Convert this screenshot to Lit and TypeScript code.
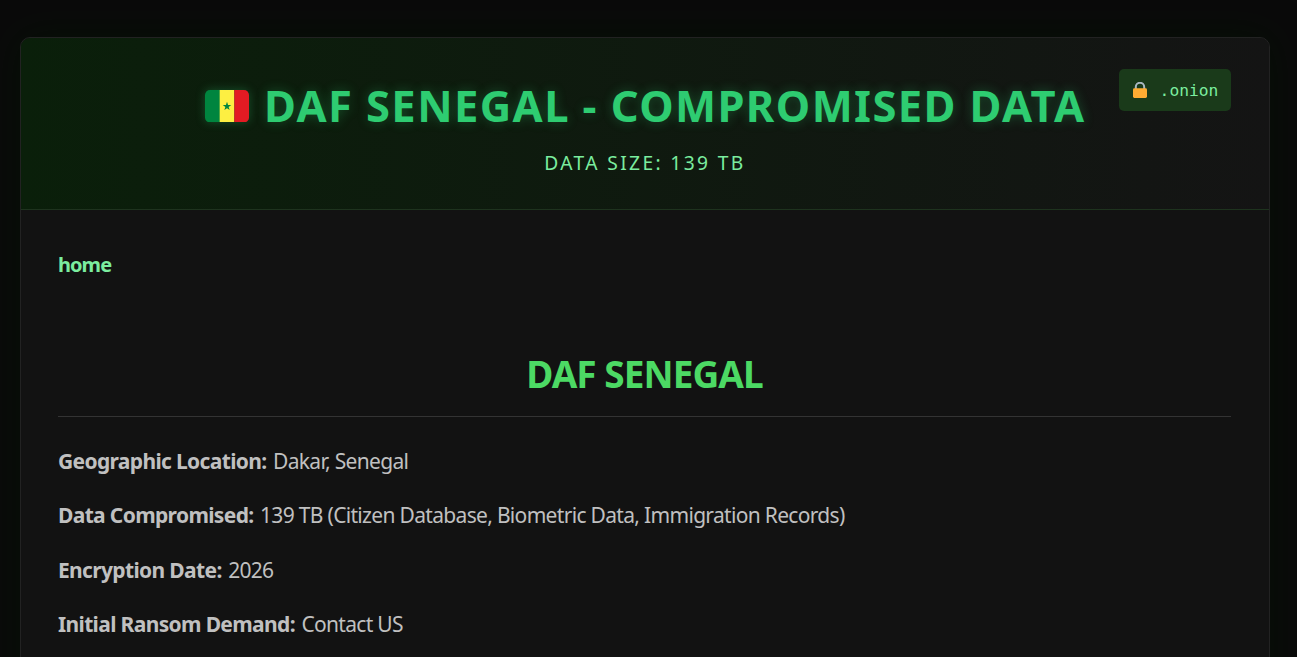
import { html, css, LitElement } from 'lit';
import { customElement, property } from 'lit/decorators.js';

@customElement('senegal-flag')
export class SenegalFlag extends LitElement {
  static styles = css`
    :host {
      display: block;
      width: 44px;
      height: 32.5px;
      margin-top: 1.5px;
      filter: drop-shadow(0 0 5px rgba(46, 204, 113, 0.3));
    }
    svg {
      display: block;
    }
  `;

  render() {
    return html`
      <svg width="44" height="32.5" viewBox="0 0 44 32" preserveAspectRatio="none">
        <path fill="#00853f" d="M15 0H5a5 5 0 0 0-5 5v22a5 5 0 0 0 5 5h10z" />
        <path fill="#fdef42" d="M14.67 0h14.67v32H14.67z" />
        <path fill="#e31b23" d="M39 0h-9.67v32H39a5 5 0 0 0 5-5V5a5 5 0 0 0-5-5z" />
        <path fill="#00853f" d="M22 11.6l1.05 3.1h3.2l-2.6 1.95 1 3.15L22 17.9l-2.65 1.9 1-3.15-2.6-1.95h3.2z" />
      </svg>
    `;
  }
}

@customElement('onion-badge')
export class OnionBadge extends LitElement {
  static styles = css`
    :host {
      display: flex;
      align-items: center;
      box-sizing: border-box;
      width: 112px;
      height: 42px;
      padding-left: 14px;
      gap: 12.6px;
      border-radius: 5px;
      background: #1a3a1a;
      color: #7bed9f;
      font: 16.3px/24px 'DejaVu Sans Mono', monospace;
    }
    svg {
      display: block;
      flex: none;
    }
    span {
      padding-top: 1px;
    }
  `;

  render() {
    return html`
      <svg width="14" height="16" viewBox="0 0 14 16">
        <path fill="none" stroke="#aab8c2" stroke-width="2" d="M2.8 8V5a4.2 4.2 0 0 1 8.4 0v3" />
        <rect y="6.2" width="14" height="9.8" rx="1.4" fill="#ffac33" />
      </svg>
      <span>.onion</span>
    `;
  }
}

@customElement('info-row')
export class InfoRow extends LitElement {
  static styles = css`
    :host {
      display: block;
      font-size: 21px;
      line-height: 34px;
      color: #c0c0c0;
      white-space: nowrap;
    }
    .label {
      margin-right: 1px;
      font-weight: 700;
      letter-spacing: -0.65px;
    }
    .value {
      letter-spacing: -0.68px;
    }
  `;

  @property() label = '';
  @property() value = '';

  render() {
    return html`<span class="label">${this.label}:</span> <span class="value">${this.value}</span>`;
  }
}

@customElement('app-root')
export class AppRoot extends LitElement {
  static styles = css`
    :host {
      display: block;
      box-sizing: border-box;
      height: 657px;
      padding: 37px 27px 0 20px;
      overflow: hidden;
      background: #0a0a0a;
      font-family: 'Noto Sans', 'Open Sans', sans-serif;
    }
    .container {
      box-sizing: border-box;
      height: 900px;
      border: 1px solid #222;
      border-radius: 10px;
      overflow: hidden;
      background: #121212;
      box-shadow: 0 0 38px rgba(0, 20, 0, 0.6);
    }
    header {
      position: relative;
      box-sizing: border-box;
      height: 172px;
      padding-top: 37px;
      border-bottom: 1px solid #1e331e;
      background: linear-gradient(90deg, #0a1f0a 0%, #141414 100%);
    }
    onion-badge {
      position: absolute;
      top: 31px;
      right: 38px;
    }
    .title {
      display: flex;
      justify-content: center;
      align-items: center;
      gap: 15.5px;
      height: 60px;
      margin: 0;
      font-size: 43.5px;
      font-weight: 700;
      line-height: 60px;
      letter-spacing: 1.42px;
      white-space: nowrap;
      color: #2ecc71;
      text-shadow: 0 0 12px rgba(46, 204, 113, 0.3);
    }
    .size {
      margin-top: 12px;
      font-size: 19.2px;
      line-height: 32px;
      letter-spacing: 2.38px;
      text-align: center;
      color: #7bed9f;
    }
    main {
      padding: 39px 38px 0 37px;
    }
    .home {
      display: block;
      font-size: 20px;
      font-weight: 700;
      line-height: 32px;
      letter-spacing: -0.95px;
      text-decoration: none;
      color: #7bed9f;
    }
    h2 {
      margin: 67px 0 27px;
      padding-bottom: 16px;
      border-bottom: 1px solid #333;
      font-size: 37px;
      font-weight: 700;
      line-height: 52px;
      letter-spacing: -0.95px;
      text-align: center;
      color: #4cd964;
    }
    .rows {
      display: grid;
      gap: 20.3px;
    }
  `;

  rows = [
    { label: 'Geographic Location', value: 'Dakar, Senegal' },
    { label: 'Data Compromised', value: '139 TB (Citizen Database, Biometric Data, Immigration Records)' },
    { label: 'Encryption Date', value: '2026' },
    { label: 'Initial Ransom Demand', value: 'Contact US' },
  ];

  render() {
    return html`
      <div class="container">
        <header>
          <h1 class="title">
            <senegal-flag></senegal-flag>
            <span>DAF SENEGAL - COMPROMISED DATA</span>
          </h1>
          <div class="size">DATA SIZE: 139 TB</div>
          <onion-badge></onion-badge>
        </header>
        <main>
          <a class="home" href="#">home</a>
          <h2>DAF SENEGAL</h2>
          <div class="rows">
            ${this.rows.map((row) => html`<info-row .label=${row.label} .value=${row.value}></info-row>`)}
          </div>
        </main>
      </div>
    `;
  }
}
